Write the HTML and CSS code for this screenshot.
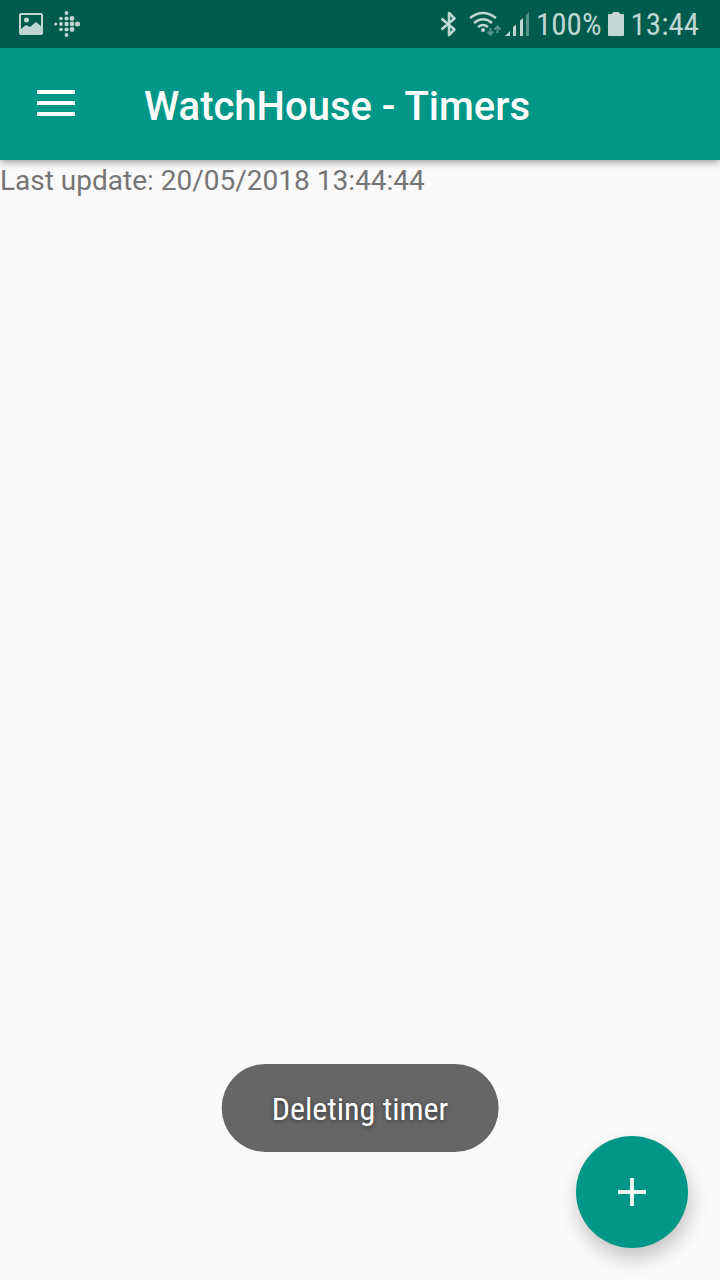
FILE: index.html
```html
<!DOCTYPE html>
<html lang="en">
<head>
<meta charset="utf-8">
<meta name="viewport" content="width=device-width, initial-scale=1">
<title>WatchHouse - Timers</title>
<link rel="stylesheet" href="styles.css">
</head>
<body>
<div class="status-bar">
  <div class="status-group">
    <svg class="icon-picture" width="24" height="22" viewBox="0 0 24 22" aria-hidden="true">
      <path fill="currentColor" fill-rule="evenodd" d="M2 0H22Q24 0 24 2V20Q24 22 22 22H2Q0 22 0 20V2Q0 0 2 0ZM2 2V16L7 12L11 14L17 9L22 13V2ZM7.500 4.500A2.500 2.500 0 1 1 7.500 9.500A2.500 2.500 0 1 1 7.500 4.500Z"/>
    </svg>
    <svg class="icon-dots" width="26" height="26" viewBox="0 0 26 26" fill="currentColor" aria-hidden="true">
      <circle cx="1.700" cy="13" r="1.500"/>
      <circle cx="7" cy="7.500" r="1.800"/><circle cx="7" cy="13" r="1.900"/><circle cx="7" cy="18.500" r="1.800"/>
      <circle cx="12.500" cy="2" r="1.900"/><circle cx="12.500" cy="7.500" r="2.100"/><circle cx="12.500" cy="13" r="2.200"/><circle cx="12.500" cy="18.500" r="2.100"/><circle cx="12.500" cy="24" r="1.900"/>
      <circle cx="18" cy="7.500" r="2.400"/><circle cx="18" cy="13" r="2.400"/><circle cx="18" cy="18.500" r="2.400"/>
      <circle cx="23.500" cy="13" r="2.500"/>
    </svg>
  </div>
  <div class="status-group">
    <svg width="18" height="26" viewBox="0 0 18 26" fill="none" stroke="currentColor" stroke-width="2.600" stroke-linejoin="round" aria-hidden="true">
      <path d="M1.500 7.500L14.500 18.500L9 24V2L14.500 7.500L1.500 18.500"/>
    </svg>
    <svg class="icon-wifi" width="32" height="26" viewBox="0 0 32 26" fill="none" stroke="currentColor" stroke-width="2.400" aria-hidden="true">
      <path d="M1 7Q14 -3 27 7M5 12Q14 4.500 23 12M9 16Q14 12 19 16"/>
      <circle cx="14" cy="19" r="2" fill="currentColor" stroke="none"/>
      <path class="dim" stroke-width="2" d="M21.500 17V23M18.500 20.500L21.500 23.500L24.500 20.500M28.500 22V16M25.500 18.500L28.500 15.500L31.500 18.500"/>
    </svg>
    <svg class="icon-signal" width="24" height="24" viewBox="0 0 24 24" fill="currentColor" aria-hidden="true">
      <path d="M0 24L5 19V24ZM8 15L11 12.500V24H8ZM15 8.500L18 6V24H15Z"/>
      <path class="dim" d="M21 3L24 0V24H21Z"/>
    </svg>
    <span class="status-text">100%</span>
    <svg class="icon-battery" width="16" height="24" viewBox="0 0 16 24" fill="currentColor" aria-hidden="true">
      <path d="M4 2Q4 0 6 0H10Q12 0 12 2H15Q16 2 16 3V23Q16 24 15 24H1Q0 24 0 23V3Q0 2 1 2Z"/>
    </svg>
    <time class="status-text">13:44</time>
  </div>
</div>
<header class="app-bar">
  <button class="menu-button" type="button" aria-label="Open menu">
    <svg width="38" height="26" viewBox="0 0 38 26" fill="currentColor" aria-hidden="true"><path d="M0 0H38V4H0ZM0 11H38V15H0ZM0 22H38V26H0Z"/></svg>
  </button>
  <h1 class="title">WatchHouse - Timers</h1>
</header>
<main class="content">
  <p class="last-update">Last update: 20/05/2018 13:44:44</p>
</main>
<div class="toast" role="status">Deleting timer</div>
<button class="fab" type="button" aria-label="Add timer">
  <svg width="28" height="28" viewBox="0 0 28 28" fill="currentColor" aria-hidden="true"><path d="M12 0H16V12H28V16H16V28H12V16H0V12H12Z"/></svg>
</button>
</body>
</html>
```
FILE: styles.css
```css
* {
  box-sizing: border-box;
}

body {
  margin: 0;
  min-height: 100vh;
  display: flex;
  flex-direction: column;
  background: #fafafa;
  font-family: Roboto, "Liberation Sans", sans-serif;
}

svg {
  display: block;
  flex: none;
}

button {
  border: 0;
  padding: 0;
  cursor: pointer;
}

.status-bar {
  position: relative;
  z-index: 1;
  display: flex;
  justify-content: space-between;
  align-items: center;
  height: 48px;
  padding: 0 21px 0 19px;
  background: #005b4f;
  color: #bfd6d3;
}

.status-group {
  display: flex;
  align-items: center;
}

.icon-dots {
  margin-left: 11px;
}

.icon-wifi {
  margin-left: 11px;
}

.icon-signal {
  margin: 0 7px 0 4px;
}

.icon-battery {
  margin: 0 7px 0 6px;
}

.dim {
  opacity: 0.45;
}

.status-text {
  font-family: "Roboto Condensed", Roboto, sans-serif;
  font-size: 31px;
  line-height: 48px;
  padding-top: 2px;
}

.app-bar {
  display: flex;
  align-items: center;
  height: 112px;
  background: #009788;
  color: #fff;
  box-shadow: 0 2px 8px rgba(0, 0, 0, 0.4);
}

.menu-button {
  display: flex;
  align-items: center;
  justify-content: center;
  width: 112px;
  height: 112px;
  padding-bottom: 2px;
  background: none;
  color: inherit;
}

.title {
  margin: 0;
  padding: 6px 0 0 32px;
  font-size: 40px;
  font-weight: 500;
  line-height: 48px;
}

.content {
  flex: 1;
}

.last-update {
  margin: 0;
  padding-top: 4px;
  color: #757575;
  font-size: 28px;
  line-height: 33px;
}

.toast {
  position: fixed;
  bottom: 128px;
  left: 50%;
  transform: translateX(-50%);
  padding: 25px 50px 23px;
  border-radius: 44px;
  background: #666;
  color: #fff;
  font-family: "Roboto Condensed", Roboto, sans-serif;
  font-size: 32px;
  line-height: 40px;
  white-space: nowrap;
  text-shadow: 0 1px 4px rgba(0, 0, 0, 0.5);
}

.fab {
  position: fixed;
  right: 32px;
  bottom: 32px;
  display: flex;
  align-items: center;
  justify-content: center;
  width: 112px;
  height: 112px;
  border-radius: 50%;
  background: #009788;
  color: #fff;
  box-shadow: 2px 10px 20px rgba(0, 0, 0, 0.22);
}
```
